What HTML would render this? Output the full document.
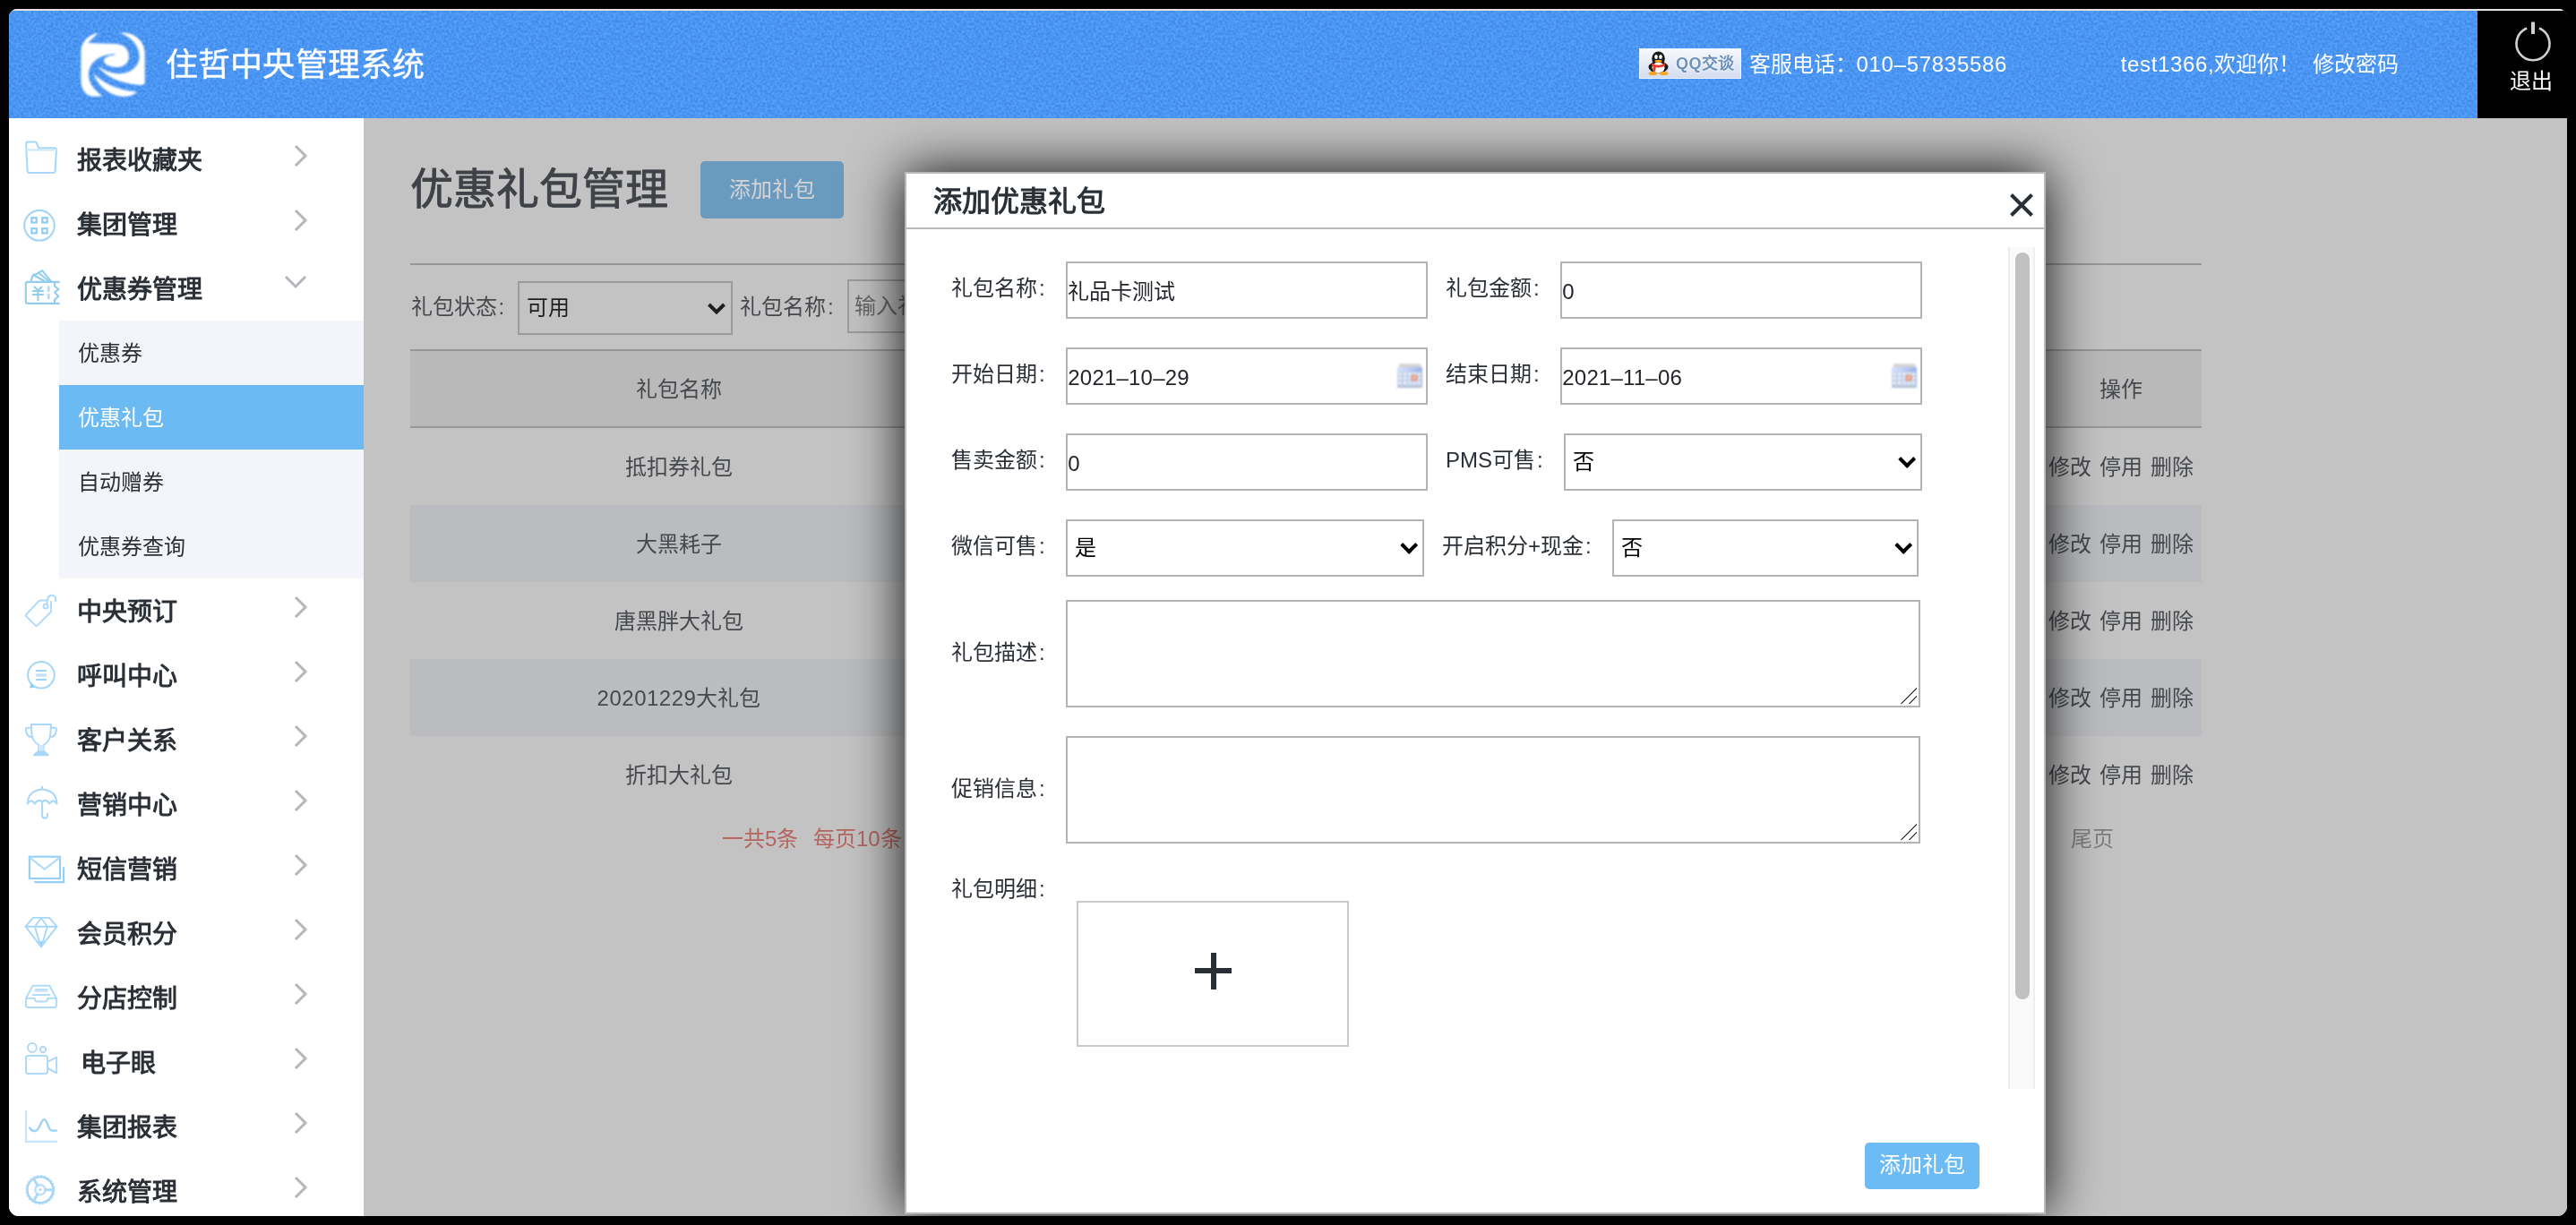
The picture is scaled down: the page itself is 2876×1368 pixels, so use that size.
<!DOCTYPE html>
<html lang="zh-CN">
<head>
<meta charset="utf-8">
<title>住哲中央管理系统</title>
<style>
*{box-sizing:border-box;margin:0;padding:0}
html,body{width:2876px;height:1368px;overflow:hidden;background:#000}
body{font-family:"Liberation Sans",sans-serif;color:#2b2f36;position:relative}
.abs{position:absolute}
.t{position:absolute;white-space:nowrap;line-height:1}
#win{position:absolute;left:10px;top:10px;width:2856px;height:1348px;border-radius:9px 9px 11px 11px;overflow:hidden;background:#fff;will-change:transform}
#topline{position:absolute;left:3px;top:0;width:2848px;height:2px;background:#e3e3e3;border-radius:2px}
/* header */
#hdr{position:absolute;left:0;top:2px;width:2856px;height:120px;background:linear-gradient(90deg,#428aea 0,#428aea 2756px,#000 2756px);color:#fff}
#logout{position:absolute;left:2756px;top:0;width:100px;height:120px;background:#000}
#qq{position:absolute;left:1820px;top:42px;width:114px;height:34px;border:1px solid #eef2f9;background:linear-gradient(#f6f8fc,#e4eaf5 55%,#d3dcee);overflow:hidden}
/* sidebar */
#side{position:absolute;left:0;top:122px;width:396px;height:1226px;background:#fff;overflow:hidden}
.mi{position:absolute;left:76px;font-size:28px;line-height:32px;font-weight:bold;color:#2b2f36;white-space:nowrap}
#sub{position:absolute;left:56px;top:226px;width:340px;height:288px;background:#f4f5fa}
.si{position:absolute;left:0;width:340px;height:72px;font-size:24px;line-height:73px;padding-left:21px;color:#2b2f36;white-space:nowrap}
.si.on{background:#6bbaf4;color:#fff}
/* content */
#main{position:absolute;left:396px;top:122px;width:2460px;height:1226px;background:#c3c3c3;overflow:hidden;color:#45484d}
#main .t{font-size:24px}
.hl{position:absolute;height:2px;background:#979797}
.row{position:absolute;left:52px;width:2000px;height:86px}
.row.alt{background:#bbbcbf}
.c{position:absolute;white-space:nowrap;font-size:24px;line-height:1;transform:translateX(-50%)}
/* modal */
#modal{position:absolute;left:604px;top:60px;width:1274px;height:1164px;background:#fff;border:2px solid #b9b9b9;box-shadow:0 0 56px rgba(0,0,0,.95);color:#2b2f36}
#modal .l{position:absolute;white-space:nowrap;font-size:24px;line-height:1;color:#2b2f36}
.inp{position:absolute;border:2px solid #b4b4b4;background:#fff;font-size:24px;color:#23262b;white-space:nowrap}
.inp span{position:absolute;left:.3px;line-height:1}
#modal .l b{font-weight:normal;margin-left:2px}
.sel span{left:8px;color:#000}

.arr{position:absolute;right:5px;top:23px;width:22px;height:16px;background:none}
.arr:before{content:"";position:absolute;left:5px;top:-3.5px;width:10.4px;height:10.4px;border-right:4.4px solid #000;border-bottom:4.4px solid #000;transform:rotate(45deg)}
.cal{position:absolute;right:4px;top:15.5px;width:28px;height:27px;filter:blur(.9px)}
.rs{position:absolute;right:2px;bottom:2px;width:18px;height:18px;background:linear-gradient(135deg,transparent 0,transparent 48%,#555 48%,#555 54%,transparent 54%,transparent 74%,#555 74%,#555 80%,transparent 80%)}
</style>
</head>
<body>
<div id="win">
  <div id="topline"></div>
  <div id="hdr">
    <svg class="abs" style="left:0;top:0;width:2756px;height:120px" viewBox="0 0 2756 120" preserveAspectRatio="none"><defs><filter id="nz" x="0" y="0" width="2756" height="120" filterUnits="userSpaceOnUse" color-interpolation-filters="sRGB"><feTurbulence type="fractalNoise" baseFrequency=".36" numOctaves="1" seed="7" result="t"/><feColorMatrix in="t" type="matrix" values="0 0 0 0 .33  0 0 0 0 .63  0 0 0 0 .985  2.6 0 0 0 -.8"/></filter></defs><rect width="2756" height="120" filter="url(#nz)"/></svg>
    <svg class="abs" style="left:80px;top:24px;width:72px;height:72px;overflow:visible;filter:blur(1px)" viewBox="0 0 72.5 72.5">
      <g fill="#fff">
        <path d="M20.3,0.4 C10,2 0.4,10 0.4,21.8 L0.4,54 C0.4,64 6,72 15,72.3 L24.8,71.8 C14,64 9,56 9,48 C9,36 18,25.5 38.3,24.4 L38.6,25.6 C30,26.2 26.3,29 26,32 C26,36 33,39.4 41.3,39.4 C50,39.4 54.3,33 54.3,27.8 C54.3,19 49,13.8 40,13.2 L9,12.2 L8.6,11.5 Z"/>
        <path d="M44,0.7 C58,-1 72,8 72.2,24 L72.2,57.5 Q71,59.4 68,59.4 C52,58.5 32,54 18.8,38.3 C30,45 38,46.6 44.3,46.6 C56,46.6 66.1,38 66.1,27.8 C66.1,14 56,5 44,0.7 Z"/>
        <path d="M14.3,46.2 C22,54 38,65 63.9,66.9 C58,72 50,73 44,72 C30,69.5 18,58 14.3,46.2 Z"/>
      </g>
    </svg>
    <div class="t" style="left:174.5px;top:43px;font-size:36px;letter-spacing:.25px;-webkit-text-stroke:.35px #fff">住哲中央管理系统</div>
    <div id="qq">
      <svg class="abs" style="left:7px;top:1px;width:28px;height:28px" viewBox="0 0 28 28">
        <ellipse cx="13.5" cy="19" rx="11" ry="6.5" fill="#1a1a1a"/>
        <ellipse cx="13.5" cy="9.5" rx="7.3" ry="8" fill="#1a1a1a"/>
        <ellipse cx="13.5" cy="19.5" rx="7" ry="6" fill="#fff"/>
        <ellipse cx="7.5" cy="26" rx="5" ry="2" fill="#f5a623"/>
        <ellipse cx="19.5" cy="26" rx="5" ry="2" fill="#f5a623"/>
        <path d="M6,14.5 Q13.5,19 21,14.5 L21,17.5 Q13.5,21.5 6,17.5 Z" fill="#e03a2c"/>
        <path d="M8,17 L11,17.5 L10,24 L7,23 Z" fill="#e03a2c"/>
        <ellipse cx="11" cy="7.5" rx="1.8" ry="2.6" fill="#fff"/>
        <ellipse cx="16" cy="7.5" rx="1.8" ry="2.6" fill="#fff"/>
        <ellipse cx="13.5" cy="12.3" rx="4" ry="1.5" fill="#f5a623"/>
      </svg>
      <div class="t" style="left:40px;top:7px;font-size:18px;font-weight:bold;color:#6d91b8;letter-spacing:.4px;filter:blur(.4px);text-shadow:0 0 2px #fff,0 0 2px #fff">QQ交谈</div>
    </div>
    <div class="t" style="left:1942.5px;top:48px;font-size:24px">客服电话：<span style="letter-spacing:.7px">010–57835586</span></div>
    <div class="t" style="left:2357.7px;top:48px;font-size:24px"><span style="letter-spacing:.65px">test1366,</span>欢迎你！</div>
    <div class="t" style="left:2571.5px;top:48px;font-size:24px">修改密码</div>
    <div id="logout">
      <svg class="abs" style="left:40px;top:12px;width:46px;height:50px;overflow:visible" viewBox="0 0 46 50">
        <path d="M15.07,7.55 A18.5,18.5 0 1 0 28.93,7.55" fill="none" stroke="#cfcfcf" stroke-width="2.6"/>
        <path d="M22,0.5 L22,14" fill="none" stroke="#cfcfcf" stroke-width="4"/>
      </svg>
      <div class="t" style="left:36px;top:66.5px;font-size:24px;color:#fff">退出</div>
    </div>
  </div>
  <div id="side">
    <div id="sub">
      <div class="si" style="top:0">优惠券</div>
      <div class="si on" style="top:72px">优惠礼包</div>
      <div class="si" style="top:144px">自动赠券</div>
      <div class="si" style="top:216px">优惠券查询</div>
    </div>
    <div class="mi" style="top:32px">报表收藏夹</div>
    <div class="mi" style="top:104px">集团管理</div>
    <div class="mi" style="top:176px">优惠券管理</div>
    <div class="mi" style="top:536px">中央预订</div>
    <div class="mi" style="top:608px">呼叫中心</div>
    <div class="mi" style="top:680px">客户关系</div>
    <div class="mi" style="top:752px">营销中心</div>
    <div class="mi" style="top:824px">短信营销</div>
    <div class="mi" style="top:896px">会员积分</div>
    <div class="mi" style="top:968px">分店控制</div>
    <div class="mi" style="top:1040px;left:80px">电子眼</div>
    <div class="mi" style="top:1112px">集团报表</div>
    <div class="mi" style="top:1184px">系统管理</div>
    <svg class="abs" style="left:0;top:0;width:396px;height:1226px" viewBox="0 0 396 1226" fill="none" stroke="#a3d2f7" stroke-width="2" stroke-linejoin="round" stroke-linecap="round">
      <!-- chevrons -->
      <g stroke="#b3b6bb" stroke-width="3" stroke-linecap="butt" stroke-linejoin="miter">
        <path d="M320,31 L331,42 L320,53"/>
        <path d="M320,103 L331,114 L320,125"/>
        <path d="M309,177 L320,188 L331,177"/>
        <path d="M320,535 L331,546 L320,557"/>
        <path d="M320,607 L331,618 L320,629"/>
        <path d="M320,679 L331,690 L320,701"/>
        <path d="M320,751 L331,762 L320,773"/>
        <path d="M320,823 L331,834 L320,845"/>
        <path d="M320,895 L331,906 L320,917"/>
        <path d="M320,967 L331,978 L320,989"/>
        <path d="M320,1039 L331,1050 L320,1061"/>
        <path d="M320,1111 L331,1122 L320,1133"/>
        <path d="M320,1183 L331,1194 L320,1205"/>
      </g>
            <g filter="url(#ib)">
      <!-- 1 folder -->
      <path d="M19.3,34 L19.3,28.8 Q19.3,26.6 21.5,26.6 L29,26.6 Q30.4,26.6 30.9,27.8 L33.2,33.3 L50.8,33.3 Q53,33.3 52.9,35.4 L51.6,58.9 Q51.4,60.9 49.4,60.9 L22.8,60.9 Q20.8,60.9 20.6,58.9 Z" stroke="#a9d7f8"/>
      <path d="M20.3,35.4 L52,35.4" stroke="#cfe8fb" stroke-width="2.4"/>
      <!-- 2 group -->
      <circle cx="34" cy="119.8" r="16.8" stroke="#a0d3f8"/>
      <g stroke="#8ecbf6" stroke-width="2.2" stroke-linejoin="miter"><rect x="25.4" y="111.2" width="5.3" height="5.3"/><rect x="37.3" y="111.2" width="5.3" height="5.3"/><rect x="25.4" y="123.1" width="5.3" height="5.3"/><rect x="37.3" y="123.1" width="5.3" height="5.3"/></g>
      <!-- 3 coupon -->
      <g stroke="#93cdee" stroke-width="2.1">
        <path d="M55.8,182.9 L20.8,182.9 Q18.8,182.9 18.8,184.9 L18.8,204.9 Q18.8,206.9 20.8,206.9 L55.8,206.9"/>
        <path d="M51,182.9 L51,187.5 L55.4,190.9 L51,194.5 L55.4,198.9 L51,202.5 L51,206.9"/>
        <path d="M24.3,182.5 L26.8,175 L30.9,174 L37.1,170.1 L47.2,182.3 M28.4,175.8 L40,182 M33.5,173 L44,181.5"/>
        <path d="M28.6,188.4 L32.5,192.4 L36.4,188.4 M32.5,192.4 L32.5,203.3 M26.8,193 L38.2,193 M26.8,197 L38.2,197"/>
        <path d="M44.2,188.6 L44.2,192.7 M44.2,196.9 L44.2,201" stroke="#b7dcf3" stroke-width="3"/>
      </g>
      <!-- 4 tag -->
      <path d="M42,538.6 L35,538.6 Q34,538.6 33.2,539.4 L19.2,554.2 Q18.3,555.2 19.2,556.1 L29.8,566.6 Q30.7,567.5 31.6,566.6 L46.4,551.8 Q47.1,551 47.1,550 L46.9,540" stroke="#afdaf9"/>
      <circle cx="41" cy="545" r="2.5" stroke="#afdaf9"/>
      <path d="M42.5,541.5 L43.2,537 Q44.2,532.6 48.5,532.7 Q52.8,533 51.9,539.5" stroke="#afdaf9"/>
      <!-- 5 chat -->
      <circle cx="35.9" cy="621.8" r="14.8" stroke="#a5d6f8"/>
      <path d="M24.6,630.6 L22.9,636.4 L29.3,635.4 Z" fill="#8fcdf6" stroke="none"/>
      <path d="M30.2,617 L41.9,617 M30.2,627 L41.9,627" stroke="#9ad2f7" stroke-linecap="butt"/>
      <path d="M30.2,622 L41.9,622" stroke="#c3e3fa" stroke-width="3.4" stroke-linecap="butt"/>
      <!-- 6 trophy -->
      <g stroke="#abd8f9">
        <path d="M24.9,676.9 L46.9,676.9 L46.3,688 Q45.5,696 38.6,700 L38.6,707 L33.2,707 L33.2,700 Q26.3,696 25.5,688 Z"/>
        <path d="M24.9,680.7 L20.6,680.7 Q18.8,680.7 18.9,682.6 Q19.4,690.6 25.8,691.3 M46.9,680.7 L51.2,680.7 Q53,680.7 52.9,682.6 Q52.4,690.6 46,691.3"/>
        <path d="M33.2,700 L38.6,700 L38.6,707.6 L33.2,707.6 Z" fill="#cfe8fb" stroke="none"/>
        <path d="M28,711.2 L32,707.6 L39.8,707.6 L43.8,711.2 Z" fill="#a3d4f8"/>
      </g>
      <!-- 7 umbrella -->
      <g stroke="#aad8f9">
        <path d="M20.8,765 Q21.5,751 37.1,749.6 Q52.7,751 53.4,765"/>
        <path d="M20.8,765.4 Q24.8,759.4 28.9,765.4 Q33,759.4 37.1,763.6 Q41.2,759.4 45.2,765.4 Q49.3,759.4 53.4,765.4" stroke-width="2.3"/>
        <path d="M37.1,746.6 L37.1,749.6 M37.1,763.6 L37.1,778.6 Q37.3,781.6 40,781.6 Q43,781.6 43,778.4 L43,776.4"/>
      </g>
      <!-- 8 mail -->
      <g stroke="#96d0f7" stroke-width="2.2" stroke-linejoin="miter">
        <rect x="22.9" y="824.7" width="34.1" height="24.3"/>
        <path d="M23.8,826.1 L39.8,838.7 L56.1,826.1" stroke="#b2dcf9"/>
        <path d="M61.1,836.2 L61.1,853.1 L28.4,853.1" stroke-linecap="butt"/>
      </g>
      <!-- 9 diamond -->
      <g stroke="#a7d7f9" stroke-width="1.9">
        <path d="M27,892.9 L44.9,892.9 L53.5,902.7 L35.9,925.3 L18.6,902.7 Z"/>
        <path d="M18.6,902.7 L53.5,902.7 M35.9,893.3 L28.9,902.7 L35.2,924 M35.9,893.3 L43,902.7 L36.6,924"/>
        <path d="M33,920 L38.8,920 L35.9,925.3 Z" fill="#8fcdf6"/>
      </g>
      <!-- 10 tray -->
      <g stroke="#b0dbf9">
        <path d="M19,982.7 L26.6,968.7 L45.3,968.7 L52.9,982.7"/>
        <path d="M19,982.7 L28.4,982.7 Q29.4,986.6 31.4,986.6 L40.4,986.6 Q42.4,986.6 43.4,982.7 L52.9,982.7 L52.9,991 Q52.9,993 50.9,993 L21,993 Q19,993 19,991 Z"/>
        <path d="M26.8,979 L45.3,979"/>
        <path d="M30,973.8 L42,973.8" stroke-width="3.4" stroke="#bfe1fa"/>
      </g>
      <!-- 11 camera -->
      <g stroke="#aed9f9">
        <rect x="19" y="1046.9" width="24" height="20.1" rx="2.5"/>
        <path d="M43.5,1053.6 L53.1,1048.7 L53.1,1066.3 L43.5,1061"/>
        <circle cx="25.9" cy="1038" r="4.9"/>
        <circle cx="38" cy="1040.1" r="3.2"/>
        <circle cx="23.1" cy="1051" r=".9" fill="#c5e4fb" stroke="none"/>
      </g>
      <!-- 12 chart -->
      <path d="M19,1108.2 L19,1142.9 L53.8,1142.9" stroke="#c6e4fa" stroke-width="2.2" stroke-linecap="butt" stroke-linejoin="miter"/>
      <path d="M22.7,1126.5 C24,1130 26.5,1131.2 29,1131 C34.5,1130.8 35.5,1118.2 39.4,1118.2 C43.3,1118.2 43.5,1130.7 47.8,1130.7 L53.8,1130.7" stroke="#9dd2f7" stroke-width="2.3" stroke-linecap="butt"/>
      <!-- 13 gear -->
      <g stroke="#9fd3f8">
        <circle cx="34.9" cy="1196.7" r="14.4" stroke-width="2.2"/>
        <circle cx="34.9" cy="1196.7" r="15.8" stroke-width="1.6" stroke-dasharray="1.6 2.54" stroke="#b5dcf9"/>
        <circle cx="34.9" cy="1196.7" r="5.6" stroke="#bfe1fa" stroke-width="2.6"/>
        <circle cx="34.9" cy="1196.7" r="1.4" fill="#9fd3f8" stroke="none"/>
        <path d="M40.5,1196.7 L48.5,1196.7 M32.1,1191.9 L27.6,1184.5 M32.1,1201.5 L27.6,1208.9" stroke-width="3" stroke="#add9f9"/>
      </g>
      </g>
      <defs><filter id="ib" x="0" y="0" width="396" height="1226" filterUnits="userSpaceOnUse"><feGaussianBlur stdDeviation="0.45"/></filter></defs>

    </svg>
  </div>
  <div id="main">
    <div class="t" style="left:51.5px;top:56.3px;font-size:48px;color:#3f4247;-webkit-text-stroke:.9px #3f4247">优惠礼包管理</div>
    <div class="abs" style="left:376px;top:48px;width:160px;height:64px;border-radius:5px;background:#6a9bbf;color:#d4d4d4;font-size:24px;line-height:64px;text-align:center">添加礼包</div>
    <div class="hl" style="left:52px;top:162px;width:2000px"></div>
    <div class="t" style="left:52.5px;top:199px">礼包状态<b style="font-weight:normal;margin-left:2px">:</b></div>
    <div class="abs" style="left:172px;top:182px;width:240px;height:60px;border:2px solid #9b9b9b"></div>
    <div class="t" style="left:181.8px;top:200px;color:#1f1f1f">可用</div>
    <svg class="abs" style="left:382px;top:204px;width:24px;height:18px" viewBox="0 0 24 18"><path d="M3.5,4 L12,12.5 L20.5,4" fill="none" stroke="#1f1f1f" stroke-width="4"/></svg>
    <div class="t" style="left:420px;top:199px">礼包名称<b style="font-weight:normal;margin-left:2px">:</b></div>
    <div class="abs" style="left:540px;top:180px;width:240px;height:60px;border:2px solid #9b9b9b"></div>
    <div class="t" style="left:548px;top:198px;color:#666">输入礼包名称</div>
    <!-- table -->
    <div class="abs" style="left:52px;top:258px;width:2000px;height:88px;background:#b9b9b9"></div>
    <div class="hl" style="left:52px;top:258px;width:2000px"></div>
    <div class="hl" style="left:52px;top:344px;width:2000px"></div>
    <div class="c" style="left:352px;top:291px">礼包名称</div>
    <div class="c" style="left:1962px;top:291px">操作</div>
    <div class="row" style="top:346px"><div class="c" style="left:300px;top:32px">抵扣券礼包</div><div class="c" style="left:1910px;top:32px;word-spacing:2px">修改 停用 删除</div></div>
    <div class="row alt" style="top:432px"><div class="c" style="left:300px;top:32px">大黑耗子</div><div class="c" style="left:1910px;top:32px;word-spacing:2px">修改 停用 删除</div></div>
    <div class="row" style="top:518px"><div class="c" style="left:300px;top:32px">唐黑胖大礼包</div><div class="c" style="left:1910px;top:32px;word-spacing:2px">修改 停用 删除</div></div>
    <div class="row alt" style="top:604px"><div class="c" style="left:300px;top:32px"><span style="letter-spacing:.5px">20201229</span>大礼包</div><div class="c" style="left:1910px;top:32px;word-spacing:2px">修改 停用 删除</div></div>
    <div class="row" style="top:690px"><div class="c" style="left:300px;top:32px">折扣大礼包</div><div class="c" style="left:1910px;top:32px;word-spacing:2px">修改 停用 删除</div></div>
    <div class="t" style="left:400px;top:793px;color:#b5655f">一共5条</div>
    <div class="t" style="left:502px;top:793px;color:#b5655f">每页10条</div>
    <div class="t" style="left:1906px;top:793px;color:#7d7d7d">尾页</div>
        <div id="modal">
      <div class="t" style="left:30px;top:15px;font-size:32px;font-weight:bold;color:#2b2f36">添加优惠礼包</div>
      <svg class="abs" style="left:1230px;top:20px;width:30px;height:30px" viewBox="0 0 30 30"><path d="M3.5,3.5 L26.5,26.5 M26.5,3.5 L3.5,26.5" fill="none" stroke="#2a2e35" stroke-width="4"/></svg>
      <div class="abs" style="left:0;top:60px;width:1270px;height:2px;background:#b9b9b9"></div>
      <!-- scrollbar -->
      <div class="abs" style="left:1230px;top:82px;width:30px;height:940px;background:#fafafa;border-left:2px solid #ebebeb;border-right:2px solid #efefef"></div>
      <div class="abs" style="left:1238px;top:88px;width:16px;height:834px;border-radius:8px;background:#c1c1c1"></div>
      <!-- row 1 -->
      <div class="l" style="left:50px;top:116px">礼包名称<b>:</b></div>
      <div class="inp" style="left:178px;top:98px;width:404px;height:64px"><span style="top:20px">礼品卡测试</span></div>
      <div class="l" style="left:602px;top:116px">礼包金额<b>:</b></div>
      <div class="inp" style="left:730px;top:98px;width:404px;height:64px"><span style="top:20px">0</span></div>
      <!-- row 2 -->
      <div class="l" style="left:50px;top:212px">开始日期<b>:</b></div>
      <div class="inp" style="left:178px;top:194px;width:404px;height:64px"><span style="top:20px;letter-spacing:.2px">2021–10–29</span><svg class="cal" viewBox="0 0 28 27"><defs><linearGradient id="cg1" x1="0" x2="1" y1="0" y2="0"><stop offset="0" stop-color="#d6e1fb"/><stop offset=".4" stop-color="#c3d2f5"/><stop offset="1" stop-color="#9bb2e8"/></linearGradient></defs><rect x="2" y=".3" width="24.5" height="4.2" fill="#d3d3d1"/><rect x="0" y="4" width="28" height="6" fill="url(#cg1)"/><rect x="0" y="9.6" width="28" height="17" fill="#c4d2e9"/><g fill="#f4f7fc"><circle cx="3" cy="11.4" r="1.5"/><circle cx="8.6" cy="11.4" r="1.5"/><circle cx="14" cy="11.4" r="1.5"/><circle cx="19.3" cy="11.4" r="1.5"/><circle cx="24.5" cy="11.4" r="1.5"/><circle cx="3" cy="16.2" r="1.5"/><circle cx="8.6" cy="16.2" r="1.5"/><circle cx="14" cy="16.2" r="1.3"/><circle cx="24.5" cy="16.2" r="1.2"/><circle cx="3" cy="21.4" r="1.5"/><circle cx="8.6" cy="21.4" r="1.5"/><circle cx="14" cy="21.4" r="1.5"/><circle cx="19.3" cy="21.4" r="1.5"/><circle cx="24.5" cy="21.4" r="1.5"/></g><circle cx="19" cy="16" r="3.7" fill="#e8967b"/><circle cx="19" cy="15.8" r="1.2" fill="#fbeee9"/><rect x="0" y="25.3" width="28" height="1.7" fill="#a9b6ce"/><rect x="26.8" y="9.6" width="1.2" height="17" fill="#aebbd3"/></svg></div>
      <div class="l" style="left:602px;top:212px">结束日期<b>:</b></div>
      <div class="inp" style="left:730px;top:194px;width:404px;height:64px"><span style="top:20px;letter-spacing:.2px">2021–11–06</span><svg class="cal" viewBox="0 0 28 27"><defs><linearGradient id="cg2" x1="0" x2="1" y1="0" y2="0"><stop offset="0" stop-color="#d6e1fb"/><stop offset=".4" stop-color="#c3d2f5"/><stop offset="1" stop-color="#9bb2e8"/></linearGradient></defs><rect x="2" y=".3" width="24.5" height="4.2" fill="#d3d3d1"/><rect x="0" y="4" width="28" height="6" fill="url(#cg2)"/><rect x="0" y="9.6" width="28" height="17" fill="#c4d2e9"/><g fill="#f4f7fc"><circle cx="3" cy="11.4" r="1.5"/><circle cx="8.6" cy="11.4" r="1.5"/><circle cx="14" cy="11.4" r="1.5"/><circle cx="19.3" cy="11.4" r="1.5"/><circle cx="24.5" cy="11.4" r="1.5"/><circle cx="3" cy="16.2" r="1.5"/><circle cx="8.6" cy="16.2" r="1.5"/><circle cx="14" cy="16.2" r="1.3"/><circle cx="24.5" cy="16.2" r="1.2"/><circle cx="3" cy="21.4" r="1.5"/><circle cx="8.6" cy="21.4" r="1.5"/><circle cx="14" cy="21.4" r="1.5"/><circle cx="19.3" cy="21.4" r="1.5"/><circle cx="24.5" cy="21.4" r="1.5"/></g><circle cx="19" cy="16" r="3.7" fill="#e8967b"/><circle cx="19" cy="15.8" r="1.2" fill="#fbeee9"/><rect x="0" y="25.3" width="28" height="1.7" fill="#a9b6ce"/><rect x="26.8" y="9.6" width="1.2" height="17" fill="#aebbd3"/></svg></div>
      <!-- row 3 -->
      <div class="l" style="left:50px;top:308px">售卖金额<b>:</b></div>
      <div class="inp" style="left:178px;top:290px;width:404px;height:64px"><span style="top:20px">0</span></div>
      <div class="l" style="left:602px;top:308px">PMS可售<b>:</b></div>
      <div class="inp sel" style="left:734px;top:290px;width:400px;height:64px"><span style="top:18px">否</span><b class="arr"></b></div>
      <!-- row 4 -->
      <div class="l" style="left:50px;top:404px">微信可售<b>:</b></div>
      <div class="inp sel" style="left:178px;top:386px;width:400px;height:64px"><span style="top:18px">是</span><b class="arr"></b></div>
      <div class="l" style="left:598px;top:404px">开启积分+现金<b>:</b></div>
      <div class="inp sel" style="left:788px;top:386px;width:342px;height:64px"><span style="top:18px">否</span><b class="arr"></b></div>
      <!-- textareas -->
      <div class="l" style="left:50px;top:523px">礼包描述<b>:</b></div>
      <div class="inp" style="left:178px;top:476px;width:954px;height:120px"><u class="rs"></u></div>
      <div class="l" style="left:50px;top:675px">促销信息<b>:</b></div>
      <div class="inp" style="left:178px;top:628px;width:954px;height:120px"><u class="rs"></u></div>
      <!-- detail -->
      <div class="l" style="left:50px;top:787px">礼包明细<b>:</b></div>
      <div class="abs" style="left:190px;top:812px;width:304px;height:163px;border:2px solid #c9c9c9;background:#fff">
        <div class="abs" style="left:130px;top:73px;width:41px;height:6px;background:#2a2e35"></div>
        <div class="abs" style="left:147.5px;top:56px;width:6px;height:41px;background:#2a2e35"></div>
      </div>
      <div class="abs" style="left:1070px;top:1082px;width:128px;height:52px;border-radius:5px;background:#6cbbf4;color:#fff;font-size:24px;line-height:50px;text-align:center">添加礼包</div>
    </div>

  </div>
</div>
</body>
</html>
